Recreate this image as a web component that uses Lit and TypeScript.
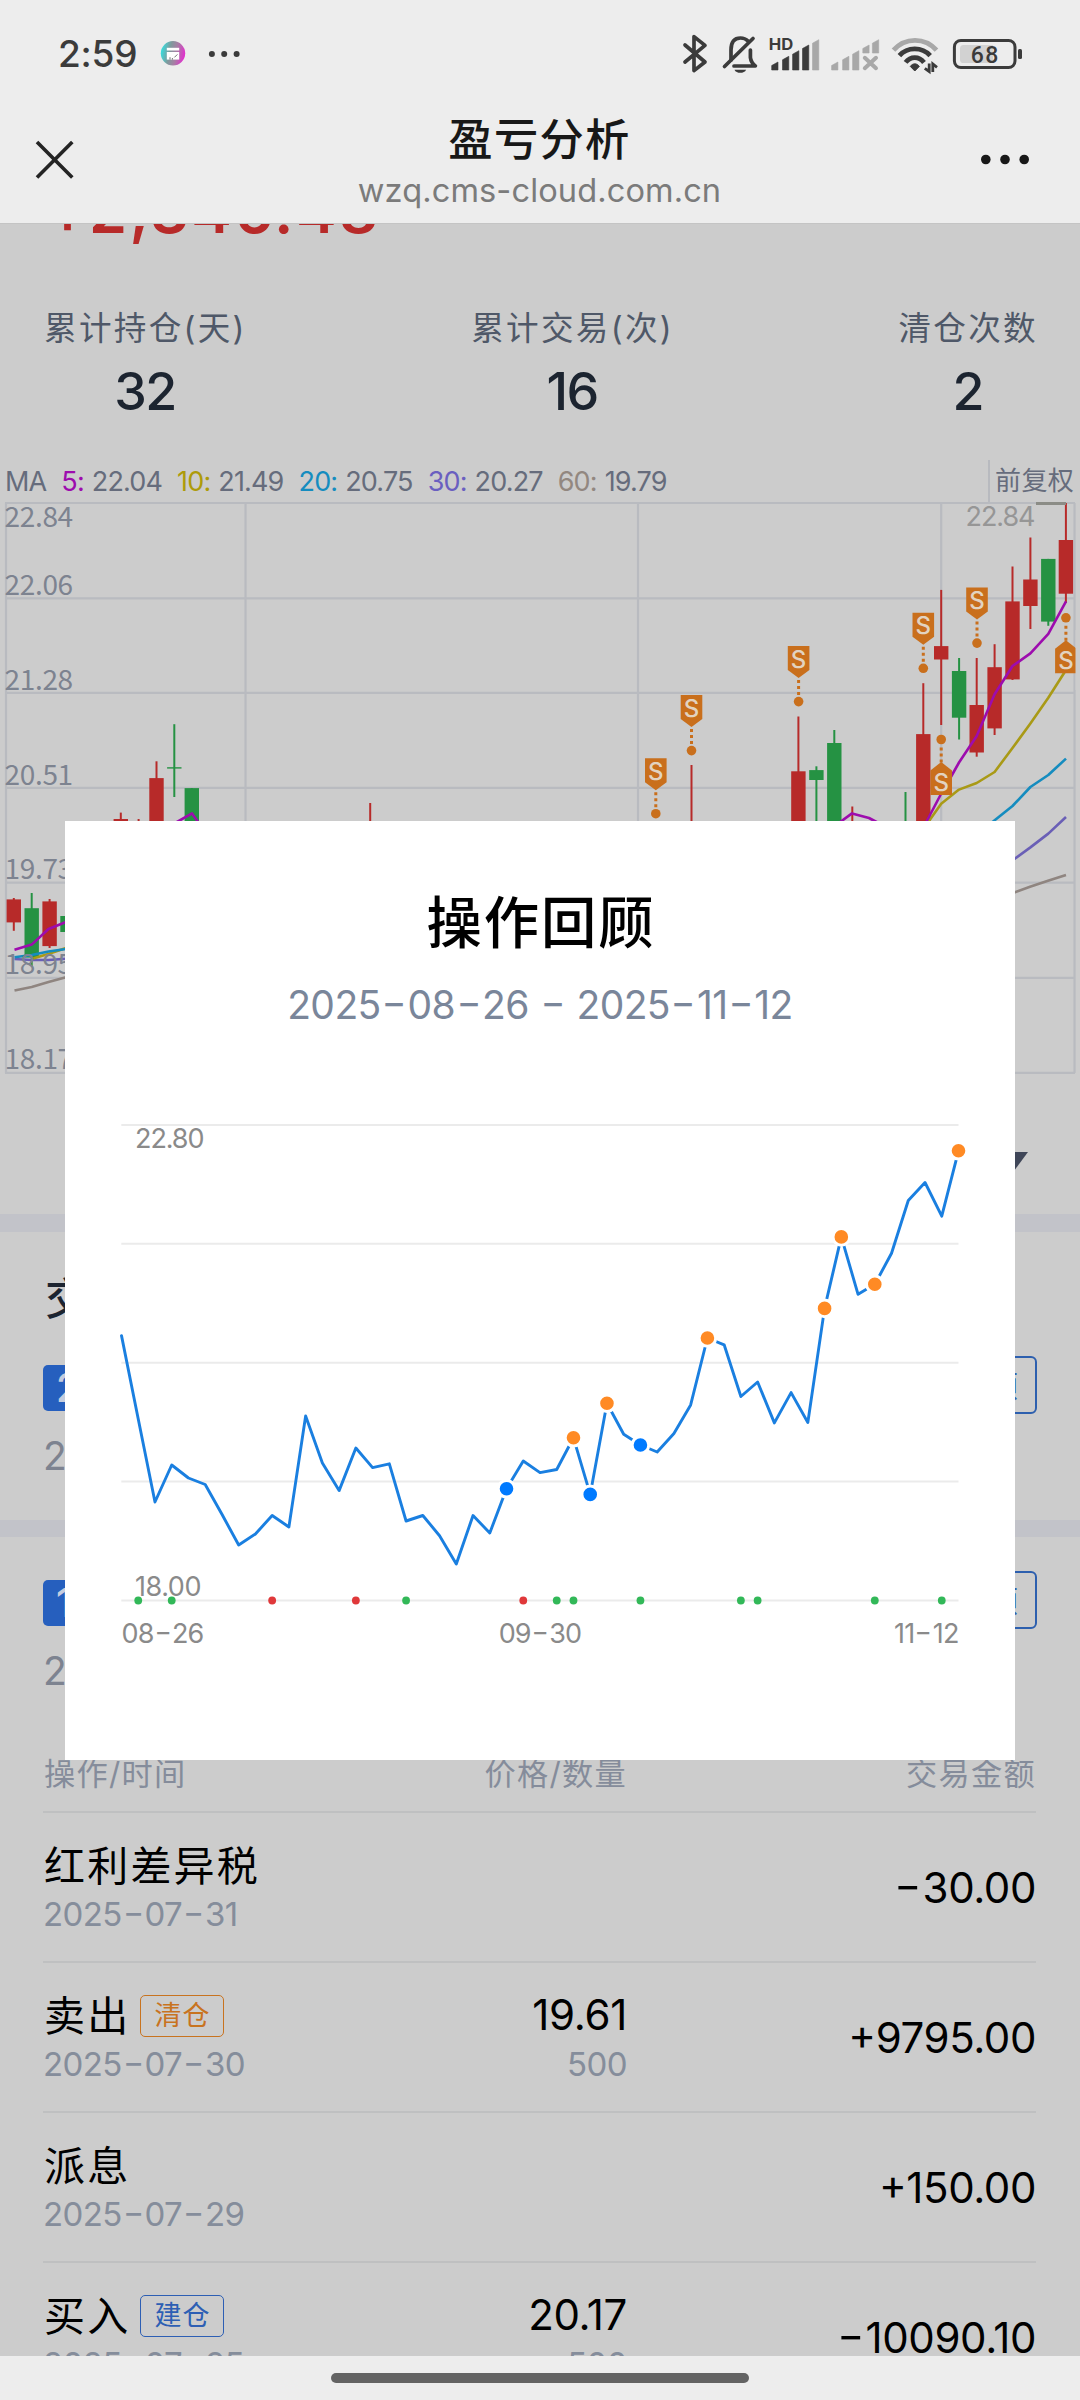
import { LitElement, html, svg, css } from "lit";
import { customElement, property } from "lit/decorators.js";

const RED = "#b72a29";
const GREEN = "#259243";

/* Wide, raised hyphens for dates and negative amounts. */
const dashStyles = css`
  .dash { display: inline-block; margin: 0 0.115em; transform: scaleX(1.4); letter-spacing: 0; }
`;
const dashed = (text: string) =>
  text.split(/(-)/).map((p) => (p === "-" ? html`<span class="dash">-</span>` : p));

/* x, colour, wick top, body top, body bottom, wick bottom */
type Candle = [number, string, number, number, number, number];
const CANDLES: Candle[] = [
  [13.8, RED, 898, 899.4, 922.4, 930.8],
  [31.7, GREEN, 893, 908.2, 957.6, 966.4],
  [49.6, RED, 899, 901.4, 946.1, 948],
  [67.5, GREEN, 916, 916, 932, 932],
  [120.8, RED, 812.6, 819, 830, 830],
  [138.6, RED, 819, 828, 840, 840],
  [156.5, RED, 761.3, 778.1, 840, 840],
  [174.3, GREEN, 724.2, 767.2, 768.6, 797],
  [191.8, GREEN, 788, 788.1, 840, 840],
  [370.2, RED, 803, 830, 840, 840],
  [691.5, RED, 765, 830, 840, 840],
  [798.4, RED, 716.5, 771.3, 840, 840],
  [816.4, GREEN, 766.3, 770.1, 780, 840],
  [834.3, GREEN, 730, 743, 840, 840],
  [852.3, RED, 806.5, 830, 840, 840],
  [905.5, GREEN, 792, 830, 840, 840],
  [923.3, RED, 683.2, 734.1, 840, 840],
  [941.2, RED, 589.9, 646.1, 659.5, 725],
  [959.1, GREEN, 658, 671, 717.7, 739.5],
  [976.7, RED, 658, 705, 752.5, 756.7],
  [994.6, RED, 644.2, 667.2, 728.4, 735],
  [1012.5, RED, 566.5, 601.4, 679.4, 680],
  [1030.4, RED, 537.5, 579.5, 606, 629],
  [1048.3, GREEN, 558.9, 558.9, 621.6, 625.8],
  [1065.9, RED, 503, 540, 593.7, 603],
];

const AVERAGES: [string, string][] = [
  ["#8f8580", "14.5,990.5 31.7,987 48.5,982 66,977.2"],
  ["#8f8580", "1013,893 1030,886.8 1048,880.7 1066,875"],
  ["#6a5fb6", "14.5,959 31.7,960 48.5,960 66,958.8"],
  ["#6a5fb6", "1013,860 1030.4,847.4 1048.3,833.6 1066,817"],
  ["#a99a16", "33,958.4 49,953.8 66,948"],
  ["#a99a16", "920,835 929,821 941.2,803.8 959,789.6 976.7,783 994.6,772 1012.5,748 1030.4,723.4 1048.3,697.8 1066,670"],
  ["#158cbf", "14.5,957.3 31.7,955 48.5,951.5 66,949"],
  ["#158cbf", "985,828 1012.5,806 1030.4,787 1048.3,775 1066,758.6"],
  ["#9d0cae", "14.5,949.8 31.7,944.6 48.5,929 66,922"],
  ["#9d0cae", "170,826 192,813.4 201,826"],
  ["#9d0cae", "832,828 852,813.4 869,818 884,826"],
  ["#9d0cae", "920,834 941,794 952,775 959,762.5 976.7,736 994.6,694.3 1012.5,666 1030.4,653.4 1048.3,633.9 1066,601.4"],
];

const PRICE_LABELS: [string, number][] = [
  ["22.84", 527], ["22.06", 594.8], ["21.28", 689.7], ["20.51", 784.6],
  ["19.73", 879], ["18.95", 973.8], ["18.17", 1068.5],
];

const SELL_DOWN: [number, number][] = [
  [655.8, 758.2], [691.5, 695.1], [798.6, 646.1], [923.3, 612.8], [977, 587.6],
];
const SELL_UP: [number, number][] = [[1065.9, 617.8], [941.2, 739.5]];

const REVIEW = [
  1335.6, 1419, 1502, 1465, 1478, 1484.5, 1514.3, 1545, 1534, 1515.5, 1527, 1416, 1463,
  1490.6, 1448, 1467.6, 1463.8, 1521, 1515.5, 1535.7, 1564, 1515.5, 1533, 1488.7, 1461,
  1472.6, 1469.5, 1437.8, 1494.4, 1403.3, 1434.3, 1445, 1452, 1433.6, 1404.9, 1338,
  1344.8, 1396.5, 1382, 1422.9, 1392.6, 1422.5, 1308.4, 1236.9, 1294.3, 1284.3, 1253.3,
  1200.5, 1182.5, 1216.2, 1150.8,
];
const BUYS = [23, 28, 31];
const SELLS = [27, 29, 35, 42, 43, 45, 50];
const RED_TICKS = [9, 14, 24];
const GREEN_TICKS = [1, 3, 17, 26, 27, 31, 37, 38, 45, 49];
const px = (i: number) => 121.5 + i * 16.74;

@customElement("status-bar")
class StatusBar extends LitElement {
  static styles = css`
    :host { display: flex; align-items: center; height: 108px; padding: 0 55px 0 58px; color: #3b3b3b; }
    .time { font-size: 37px; font-weight: 500; letter-spacing: -0.2px; line-height: 108px; width: 102px; }
    .left { width: 84px; height: 28px; }
    .right { width: 346px; height: 48px; margin-left: auto; }
    .hd { font: 700 15.5px Inter, sans-serif; }
    .pct { font: 500 23px Roboto, sans-serif; }
  `;
  bar(x: number, top: number, c: string, bottom = 70) {
    return svg`<path d="M${x} ${bottom}V${top + 3.5}L${x + 6.3} ${top}V${bottom}Z" fill=${c} stroke=${c} stroke-width=".6" stroke-linejoin="round"/>`;
  }
  render() {
    const d = "#3b3b3b", g = "#a8a8a8";
    return html`
      <span class="time">2:59</span>
      <svg class="left" viewBox="160 40 84 28">
        <defs><linearGradient id="a" x1="0" x2="1" y1=".4" y2=".6">
          <stop offset="0" stop-color="#35dfe0"/><stop offset=".35" stop-color="#7f9a9c"/>
          <stop offset=".62" stop-color="#a67fa4"/><stop offset="1" stop-color="#e62bd0"/>
        </linearGradient></defs>
        <circle cx="173" cy="53.3" r="12.2" fill="url(#a)"/>
        <rect x="166.8" y="47.8" width="12.4" height="2.7" fill="#fff"/>
        <path d="M166.8 52h12.4v7.6h-12.4z" fill="#fff"/>
        <path d="M170 59.6v-2.4M172.4 59.6v-1.6M174.4 57.4l3-3" stroke="#777" stroke-width="1"/>
        <circle cx="211.9" cy="54" r="3" fill=${d}/><circle cx="224.2" cy="54" r="3" fill=${d}/><circle cx="236.6" cy="54" r="3" fill=${d}/>
      </svg>
      <svg class="right" viewBox="679 30 346 48">
        <g fill="none" stroke=${d} stroke-width="3.7" stroke-linecap="round" stroke-linejoin="round">
          <path d="M685 45L705 62L694 70.6V36.6L705 45.4L685 62"/>
          <path d="M731 60V50C731 42 734.5 38 740.5 38C743.5 38 746 39 748 41"/>
          <path d="M750.4 50V57.5C750.8 61 752 63.5 755.4 66H734"/>
          <path d="M753 38.5L724.5 66.5"/>
        </g>
        <path d="M734.5 69.7h11.6c-1.6 4.2-10 4.2-11.6 0z" fill=${d}/>
        <text class="hd" x="768.7" y="50" fill=${d} textLength="24.5" lengthAdjust="spacingAndGlyphs">HD</text>
        ${this.bar(771.7, 62, d)}${this.bar(782.5, 56.3, d)}${this.bar(792.6, 50.7, d)}${this.bar(802.5, 45, d)}${this.bar(812.5, 39.7, g)}
        ${this.bar(831.6, 62, g)}${this.bar(842.6, 56.3, g)}${this.bar(852.6, 50.7, g)}${this.bar(862.8, 45, g, 53)}${this.bar(872.4, 39.7, g, 53)}
        <path d="M864.8 57.8L876 68.2M876 57.8L864.8 68.2" stroke=${g} stroke-width="4" stroke-linecap="round"/>
        <g fill="none" stroke-width="4.8">
          <path d="M893.5 50.2C905 37 925 37 936.5 50.2" stroke=${g}/>
          <path d="M899.4 55.6C907.5 46.6 922 46.6 930.2 55.6" stroke=${d}/>
          <path d="M905.6 62.4C910.5 56 919 56 924 62.4" stroke=${d}/>
        </g>
        <path d="M910.3 66.4C912.6 63 917 63 919.3 66.4L914.8 71Z" fill=${d} stroke=${d} stroke-width="1" stroke-linejoin="round"/>
        <path d="M929.2 63.5V71.5L924.8 68.3M932.8 72V64L937 67.3" fill="none" stroke=${d} stroke-width="2.8"/>
        <path d="M960 48.5q0-3.6 3.6-3.6H993V63H963.6q-3.6 0-3.6-3.6z" fill="#d2d2d2"/>
        <rect x="954.4" y="40.4" width="60.6" height="27.2" rx="6.5" fill="none" stroke=${d} stroke-width="3"/>
        <rect x="1018" y="49" width="4" height="10" rx="1.5" fill=${d}/>
        <text class="pct" x="984.6" y="62.5" fill=${d} text-anchor="middle" textLength="27.5">68</text>
      </svg>`;
  }
}

@customElement("nav-bar")
class NavBar extends LitElement {
  static styles = css`
    :host { display: grid; grid-template-columns: 1fr auto 1fr; align-items: start; height: 115px; padding: 0 50px 0 34px; border-bottom: 1px solid #c4c4c4; }
    .close { width: 42px; height: 42px; margin-top: 31px; }
    .more { width: 50px; height: 20px; margin-top: 42px; justify-self: end; }
    .mid { display: flex; flex-direction: column; align-items: center; gap: 6px; padding: 7px 0 0 15px; }
    .title { font-size: 44.3px; line-height: 50px; font-weight: 500; letter-spacing: 1.3px; color: #181818; }
    .url { font-size: 32.6px; line-height: 38px; letter-spacing: 0.1px; color: #7b7b7b; }
  `;
  render() {
    return html`
      <svg class="close" viewBox="34 139 42 42"><path d="M37 142L72.3 177.5M72.3 142L37 177.5" stroke="#242424" stroke-width="3.6"/></svg>
      <div class="mid"><div class="title">盈亏分析</div><div class="url">wzq.cms-cloud.com.cn</div></div>
      <svg class="more" viewBox="980 150 50 20"><g fill="#181818"><circle cx="985.8" cy="159.5" r="4.8"/><circle cx="1005" cy="159.5" r="4.8"/><circle cx="1024.2" cy="159.5" r="4.8"/></g></svg>`;
  }
}

@customElement("stats-row")
class StatsRow extends LitElement {
  static styles = css`
    :host { display: flex; justify-content: space-between; padding: 67px 42px 0 44px; }
    .item { display: flex; flex-direction: column; align-items: center; gap: 17px; }
    .label { font-size: 32.6px; line-height: 40px; letter-spacing: 2.3px; color: #4f5868; }
    .num { font-size: 52px; line-height: 53px; font-weight: 500; letter-spacing: -1.6px; color: #1c2430; padding-right: 1px; }
  `;
  render() {
    return [["累计持仓(天)", "32"], ["累计交易(次)", "16"], ["清仓次数", "2"]].map(
      ([l, n]) => html`<div class="item"><div class="label">${l}</div><div class="num">${n}</div></div>`);
  }
}

@customElement("kline-chart")
class KlineChart extends LitElement {
  static styles = css`
    :host { display: block; margin-top: 42px; }
    .legend { display: flex; align-items: center; height: 42px; padding-left: 5px; font-size: 27px; letter-spacing: -0.85px; color: #666c7c; white-space: nowrap; }
    .pair { display: flex; margin-left: 15px; gap: 8px; }
    .m5 { color: #9d0cae; } .m10 { color: #ad9b0a; } .m20 { color: #158cbf; } .m30 { color: #6a5fc0; } .m60 { color: #928780; }
    .adjust { margin-left: auto; padding: 0 6px 0 5px; border-left: 2px solid #b8babf; line-height: 42px; font-size: 26px; letter-spacing: 0.3px; }
    .chart { display: block; width: 1080px; height: 572px; }
    .axis { font: 28px "Noto Sans CJK SC", sans-serif; fill: #7d8390; }
    .high { font: 27px Inter, sans-serif; fill: #969696; }
    .s { font: 500 24px Inter, sans-serif; fill: #e2d3c0; text-anchor: middle; }
  `;
  render() {
    const ys = [503, 598.3, 692.9, 787.8, 882.7, 977.8, 1072.8];
    const mas = [["m5", "5:", "22.04"], ["m10", "10:", "21.49"], ["m20", "20:", "20.75"], ["m30", "30:", "20.27"], ["m60", "60:", "19.79"]];
    return html`
      <div class="legend"><span>MA</span>
        ${mas.map(([c, k, v]) => html`<span class="pair"><span class=${c}>${k}</span><span>${v}</span></span>`)}
        <span class="adjust">前复权</span></div>
      <svg class="chart" viewBox="0 502 1080 572">
        <g stroke="#b9bbc0" stroke-width="2.2">
          ${ys.map((y) => svg`<path d="M5 ${y}H1075"/>`)}
          ${[6, 245.5, 638, 941.2, 1074.5].map((x) => svg`<path d="M${x} 503V1073"/>`)}
        </g>
        ${CANDLES.map(([x, c, a, b, d, e]) => svg`<path d="M${x} ${a}V${e}" stroke=${c} stroke-width="2"/><rect x=${x - 7.2} y=${b} width="14.4" height=${d - b} fill=${c}/>`)}
        ${AVERAGES.map(([c, p]) => svg`<polyline points=${p} fill="none" stroke=${c} stroke-width="2.6" stroke-linejoin="round"/>`)}
        ${PRICE_LABELS.map(([t, y]) => svg`<text class="axis" x="4.6" y=${y} textLength="68.5">${t}</text>`)}
        <path d="M1036 503.5H1066" stroke="#8b8c86" stroke-width="3"/>
        <text class="high" x="965.5" y="526.2" textLength="70">22.84</text>
        ${SELL_DOWN.map(([x, y]) => svg`
          <path d="M${x - 10.8} ${y}h21.6v24L${x} ${y + 32}L${x - 10.8} ${y + 24}z" fill="#c96f1c"/>
          <text class="s" x=${x} y=${y + 21.5}>S</text>
          <path d="M${x} ${y + 34}v16" stroke="#c96f1c" stroke-width="3" stroke-dasharray="3 3"/>
          <circle cx=${x} cy=${y + 55.5} r="4.8" fill="#c96f1c"/>`)}
        ${SELL_UP.map(([x, y]) => svg`
          <path d="M${x} ${y + 22.5}l10.8 8.5v24.5h-21.6v-24.5z" fill="#c96f1c"/>
          <text class="s" x=${x} y=${y + 51}>S</text>
          <path d="M${x} ${y + 8}v16" stroke="#c96f1c" stroke-width="3" stroke-dasharray="3 3"/>
          <circle cx=${x} cy=${y} r="4.8" fill="#c96f1c"/>`)}
        <rect x="1075.5" y="630" width="5" height="60" fill="#ccc"/>
      </svg>`;
  }
}

@customElement("round-summary")
class RoundSummary extends LitElement {
  @property() no = "";
  @property() range = "";
  static styles = [dashStyles, css`
    :host { display: block; padding: 0 43px; }
    .row { display: flex; align-items: center; justify-content: space-between; height: 58px; }
    .no { background: #265fbe; color: #c4cde0; font-size: 39px; font-weight: 500; line-height: 46px; padding: 0 13px; border-radius: 5px; margin-top: 5px; }
    .btn { box-sizing: border-box; height: 58px; line-height: 56px; border: 2px solid #2d5fae; border-radius: 6px; padding: 0 17px; font-size: 30px; color: #2d5fae; }
    .range { font-size: 39px; line-height: 40px; margin-top: 22px; color: #7d8390; letter-spacing: -1px; }
  `];
  render() {
    return html`<div class="row"><span class="no">${this.no}</span><span class="btn">操作回顾</span></div>
      <div class="range">${dashed(this.range)}</div>`;
  }
}

interface Trade { name: string; date: string; tag?: string; tone?: string; price?: string; qty?: string; amount: string }
const TRADES: Trade[] = [
  { name: "红利差异税", date: "2025-07-31", amount: "-30.00" },
  { name: "卖出", date: "2025-07-30", tag: "清仓", tone: "orange", price: "19.61", qty: "500", amount: "+9795.00" },
  { name: "派息", date: "2025-07-29", amount: "+150.00" },
  { name: "买入", date: "2025-07-25", tag: "建仓", tone: "blue", price: "20.17", qty: "500", amount: "-10090.10" },
];

@customElement("trade-table")
class TradeTable extends LitElement {
  static styles = [dashStyles, css`
    :host { display: block; padding: 44px 44px 0 43px; font-feature-settings: "case"; }
    .head, .row { display: grid; grid-template-columns: 300px 284px 1fr; align-items: center; box-sizing: border-box; border-bottom: 2px solid #bfc0c1; }
    .head { height: 78px; padding-bottom: 3px; font-size: 31.2px; letter-spacing: 1.3px; color: #858c9b; }
    .head span:first-child { padding-left: 1px; }
    .row { height: 150px; padding-top: 2px; }
    .r { text-align: right; }
    .name { display: flex; align-items: center; line-height: 52px; font-size: 41px; letter-spacing: 2.2px; color: #000; padding-left: 1px; }
    .sub { line-height: 44px; font-size: 33px; letter-spacing: -0.6px; color: #858d9b; }
    .price { line-height: 50px; padding-bottom: 2px; font-size: 42px; letter-spacing: -0.3px; color: #000; }
    .amount { font-size: 42px; line-height: 52px; letter-spacing: -0.4px; color: #000; }
    .tag { box-sizing: border-box; height: 42px; line-height: 40px; padding: 0 13px; margin-left: 10px; border: 1.5px solid; border-radius: 5px; font-size: 27px; letter-spacing: 1px; }
    .orange { color: #c8731f; } .blue { color: #2d5fb4; }
  `];
  render() {
    return html`
      <div class="head"><span>操作/时间</span><span class="r">价格/数量</span><span class="r">交易金额</span></div>
      ${TRADES.map((t) => html`<div class="row">
        <div><div class="name">${t.name}${t.tag ? html`<span class="tag ${t.tone}">${t.tag}</span>` : ""}</div><div class="sub">${dashed(t.date)}</div></div>
        <div class="r">${t.price ? html`<div class="price">${t.price}</div><div class="sub">${t.qty}</div>` : ""}</div>
        <div class="r amount">${dashed(t.amount)}</div>
      </div>`)}`;
  }
}

@customElement("review-dialog")
class ReviewDialog extends LitElement {
  static styles = [dashStyles, css`
    :host { display: flex; flex-direction: column; align-items: center; box-sizing: border-box; width: 950px; height: 939px; padding-top: 67px; background: #fff; font-feature-settings: "case"; }
    .title { font-size: 55.3px; line-height: 70px; font-weight: 500; letter-spacing: 2px; color: #000; padding-left: 2px; }
    .range { font-size: 39px; line-height: 50px; margin-top: 22px; color: #7a869a; letter-spacing: -0.6px; white-space: pre; }
    .chart { display: block; width: 950px; height: 583px; }
    .lab { font: 27px Inter, sans-serif; fill: #8a8a8a; }
    .dates { display: grid; grid-template-columns: 1fr auto 1fr; width: 837px; font-size: 27px; line-height: 42px; letter-spacing: -0.9px; color: #8a8a8a; }
    .dates :last-child { text-align: right; }
  `];
  render() {
    const pts = REVIEW.map((y, i) => `${px(i)},${y}`).join(" ");
    const dot = (i: number, c: string) => svg`<circle cx=${px(i)} cy=${REVIEW[i]} r="8.3" fill=${c} stroke="#fff" stroke-width="3"/>`;
    return html`
      <div class="title">操作回顾</div>
      <div class="range">${dashed("2025-08-26 - 2025-11-12")}</div>
      <svg class="chart" viewBox="65 1030 950 583">
        ${[1124.9, 1243.8, 1362.8, 1481.5, 1600.4].map((y) => svg`<path d="M121.3 ${y}H958.5" stroke="#ebebeb" stroke-width="2"/>`)}
        <text class="lab" x="135" y="1148" textLength="69.5">22.80</text>
        <text class="lab" x="135" y="1596" textLength="66.5">18.00</text>
        <polyline points=${pts} fill="none" stroke="#1a7fe0" stroke-width="2.9" stroke-linejoin="round" stroke-linecap="round"/>
        ${BUYS.map((i) => dot(i, "#007aff"))}${SELLS.map((i) => dot(i, "#ff8a24"))}
        ${GREEN_TICKS.map((i) => svg`<circle cx=${px(i)} cy="1600.5" r="3.9" fill="#32b858"/>`)}
        ${RED_TICKS.map((i) => svg`<circle cx=${px(i)} cy="1600.5" r="3.9" fill="#e0383a"/>`)}
      </svg>
      <div class="dates"><span>${dashed("08-26")}</span><span>${dashed("09-30")}</span><span>${dashed("11-12")}</span></div>`;
  }
}

@customElement("app-root")
class AppRoot extends LitElement {
  static styles = css`
    :host { display: flex; flex-direction: column; position: relative; width: 1080px; height: 2400px; overflow: hidden; background: #ededed; font-family: Inter, "Noto Sans CJK SC", sans-serif; }
    .content { flex: 1; min-height: 0; overflow: hidden; background: #ccc; }
    .total { margin-top: -43px; padding-left: 47px; font-size: 61px; line-height: 60px; font-weight: 600; letter-spacing: 2.5px; color: #b72a29; }
    .expand { height: 140px; display: flex; align-items: flex-start; justify-content: flex-end; padding: 78px 52px 0 0; box-sizing: border-box; }
    .arrow { width: 40px; height: 27px; }
    .band { height: 18px; background: #c2c3c9; }
    .thin { height: 17px; margin-top: 44px; margin-bottom: 34px; }
    .heading { padding: 42px 43px 0 45px; font-size: 44px; line-height: 50px; font-weight: 500; color: #1c2430; margin-bottom: 32px; }
    .bottom { display: flex; justify-content: center; height: 44px; padding-top: 17px; box-sizing: border-box; }
    .pill { width: 418px; height: 10px; border-radius: 5px; background: #636363; }
    .modal { position: absolute; left: 65px; top: 821px; }
  `;
  render() {
    return html`
      <status-bar></status-bar>
      <nav-bar></nav-bar>
      <main class="content">
        <div class="total">+2,346.48</div>
        <stats-row></stats-row>
        <kline-chart></kline-chart>
        <div class="expand"><svg class="arrow" viewBox="0 0 40 27"><path d="M0 0H40L20 27Z" fill="#3f4658"/></svg></div>
        <div class="band"></div>
        <div class="heading">交易明细</div>
        <round-summary no="2" range="2025-08-26"></round-summary>
        <div class="band thin"></div>
        <round-summary no="1" range="2025-07-25"></round-summary>
        <trade-table></trade-table>
      </main>
      <div class="bottom"><div class="pill"></div></div>
      <review-dialog class="modal"></review-dialog>`;
  }
}
